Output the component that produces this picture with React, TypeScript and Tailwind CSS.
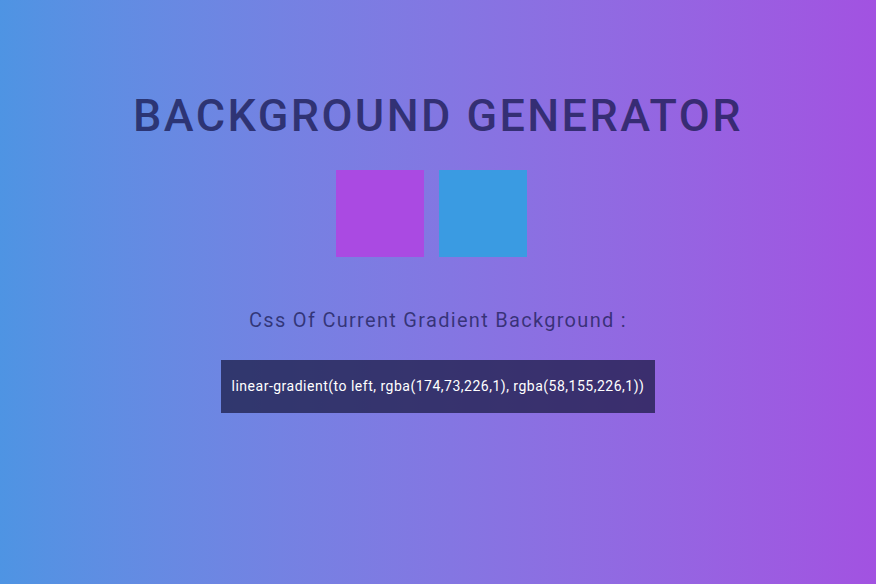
export default function App() {
  return (
    <div
      className="h-[584px] w-full bg-gradient-to-r from-[#4e94e3] to-[#a252e1] flex flex-col items-center text-center"
      style={{ fontFamily: "Roboto, 'Noto Sans', sans-serif" }}
    >
      <h1 className="mt-[89px] text-[45px] leading-[54px] font-medium tracking-[2.4px] text-[rgba(25,25,80,0.75)] uppercase">
        Background Generator
      </h1>
      <div className="mt-[27px] mr-[14px] flex gap-[15px]">
        <div className="w-[88px] h-[87px] bg-[#aa4ae2]" />
        <div className="w-[88px] h-[87px] bg-[#3a9be2]" />
      </div>
      <h3 className="mt-[51px] text-[20px] leading-[24px] tracking-[1.3px] text-[rgba(25,25,80,0.72)]">
        Css Of Current Gradient Background :
      </h3>
      <div className="mt-[28px] w-[434px] h-[53px] flex items-center justify-center bg-[rgba(25,25,65,0.72)] text-[14px] tracking-[0.5px] text-white">
        linear-gradient(to left, rgba(174,73,226,1), rgba(58,155,226,1))
      </div>
    </div>
  );
}
